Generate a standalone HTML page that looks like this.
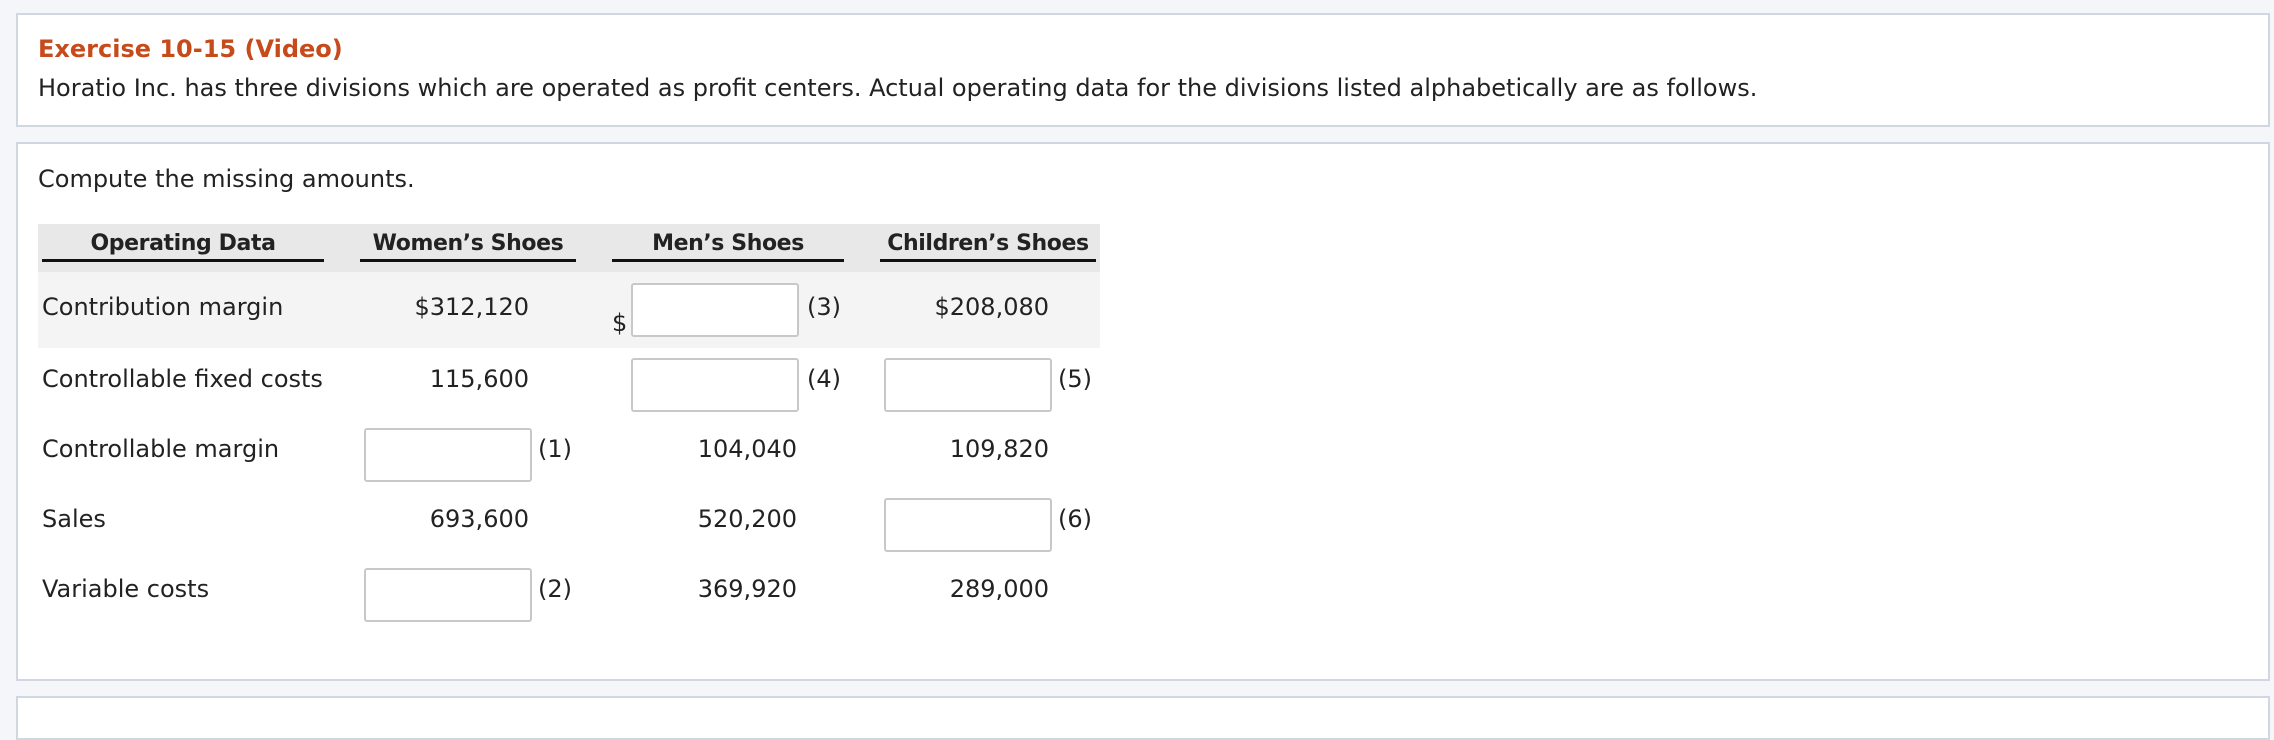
<!DOCTYPE html>
<html><head><meta charset="utf-8"><style>
body{margin:0;width:2274px;height:710px;background:#f4f6f9;font-family:"DejaVu Sans","Liberation Sans",sans-serif;color:#222;position:relative;overflow:hidden}
.p{position:absolute;left:16px;right:4px;background:#fff;border:2px solid #d0d7e0}
.a{position:absolute;white-space:nowrap;font-size:24px}
.r{text-align:right}
.in{position:absolute;width:164px;height:50px;border:2px solid #c8c8c8;border-radius:3px;background:#fff}
.h{position:absolute;font-weight:bold;font-size:22px;letter-spacing:-0.4px;text-align:center;border-bottom:3px solid #111;top:228px;height:31px;line-height:31px}
</style></head><body>
<div class="p" style="top:13px;height:110px"></div>
<div class="p" style="top:142px;height:535px"></div>
<div class="p" style="top:696px;height:40px"></div>
<div class="a" style="left:38px;top:35px;color:#c64a1a;font-weight:bold;font-size:24px">Exercise 10-15 (Video)</div>
<div class="a" style="left:38px;top:74px">Horatio Inc. has three divisions which are operated as profit centers. Actual operating data for the divisions listed alphabetically are as follows.</div>
<div class="a" style="left:38px;top:165px">Compute the missing amounts.</div>
<div style="position:absolute;left:38px;top:224px;width:1062px;height:48px;background:#e8e8e8"></div>
<div style="position:absolute;left:38px;top:272px;width:1062px;height:76px;background:#f4f4f4"></div>
<div class="h" style="left:42px;width:282px">Operating Data</div>
<div class="h" style="left:360px;width:216px">Women’s Shoes</div>
<div class="h" style="left:612px;width:232px">Men’s Shoes</div>
<div class="h" style="left:880px;width:216px">Children’s Shoes</div>
<div class="a" style="left:42px;top:293px">Contribution margin</div>
<div class="a" style="left:42px;top:365px">Controllable fixed costs</div>
<div class="a" style="left:42px;top:435px">Controllable margin</div>
<div class="a" style="left:42px;top:505px">Sales</div>
<div class="a" style="left:42px;top:575px">Variable costs</div>
<div class="a r" style="right:1745px;top:293px">$312,120</div>
<div class="a r" style="right:1745px;top:365px">115,600</div>
<div class="a r" style="right:1745px;top:505px">693,600</div>
<div class="a" style="left:612px;top:309px">$</div>
<div class="in" style="left:631px;top:283px"></div><div class="a" style="left:807px;top:293px">(3)</div>
<div class="in" style="left:631px;top:358px"></div><div class="a" style="left:807px;top:365px">(4)</div>
<div class="in" style="left:884px;top:358px"></div><div class="a" style="left:1058px;top:365px">(5)</div>
<div class="in" style="left:364px;top:428px"></div><div class="a" style="left:538px;top:435px">(1)</div>
<div class="in" style="left:884px;top:498px"></div><div class="a" style="left:1058px;top:505px">(6)</div>
<div class="in" style="left:364px;top:568px"></div><div class="a" style="left:538px;top:575px">(2)</div>
<div class="a r" style="right:1477px;top:435px">104,040</div>
<div class="a r" style="right:1477px;top:505px">520,200</div>
<div class="a r" style="right:1477px;top:575px">369,920</div>
<div class="a r" style="right:1225px;top:293px">$208,080</div>
<div class="a r" style="right:1225px;top:435px">109,820</div>
<div class="a r" style="right:1225px;top:575px">289,000</div>
</body></html>
